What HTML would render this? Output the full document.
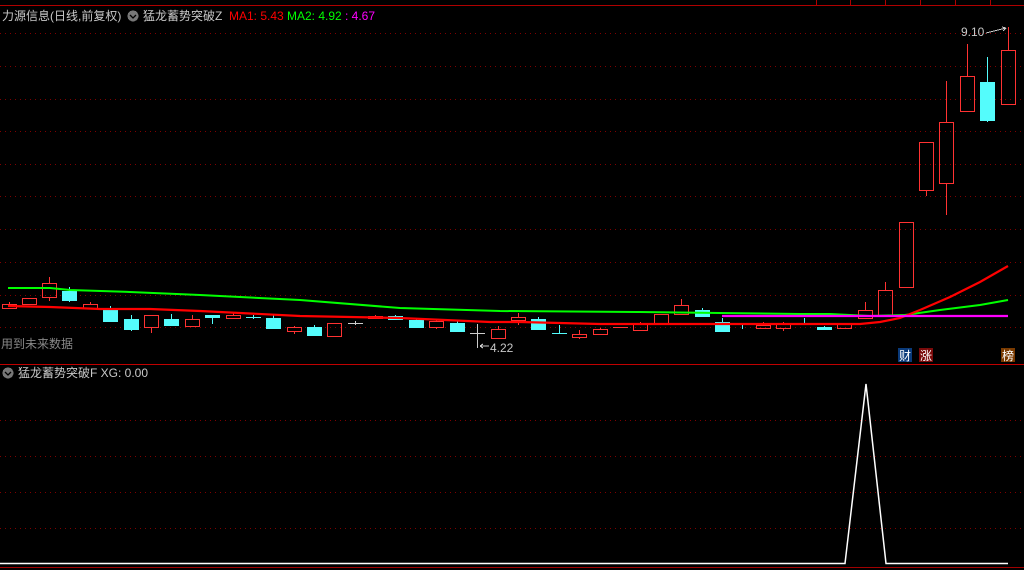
<!DOCTYPE html>
<html><head><meta charset="utf-8"><style>
html,body{margin:0;padding:0;background:#000;width:1024px;height:570px;overflow:hidden}
svg{display:block}
text{font-family:"Liberation Sans","Noto Sans CJK SC",sans-serif;font-size:12px}
</style></head><body>
<svg id="s" width="1024" height="570" xmlns="http://www.w3.org/2000/svg" shape-rendering="crispEdges">
<rect width="1024" height="570" fill="#000"/>
<line x1="0" y1="5.5" x2="1024" y2="5.5" stroke="#b00000"/>
<g stroke="#b00000"><line x1="816.5" y1="0" x2="816.5" y2="5"/><line x1="850.5" y1="0" x2="850.5" y2="5"/><line x1="885.5" y1="0" x2="885.5" y2="5"/><line x1="920.5" y1="0" x2="920.5" y2="5"/><line x1="955.5" y1="0" x2="955.5" y2="5"/><line x1="990.5" y1="0" x2="990.5" y2="5"/></g>
<g id="grid" stroke="#800000" stroke-dasharray="1,4"></g>
<line x1="0" y1="364.5" x2="1024" y2="364.5" stroke="#c00000"/>
<line x1="0" y1="567.5" x2="1024" y2="567.5" stroke="#a00000"/>
<g id="c"></g>
<text x="2" y="20" fill="#c8c8c8">力源信息(日线,前复权)</text>
<circle cx="133" cy="16" r="5.5" fill="#777"/><path d="M130 15 L133 18 L136 15" stroke="#000" fill="none" stroke-width="1.3" shape-rendering="auto"/>
<text x="143" y="20" fill="#c8c8c8">猛龙蓄势突破Z</text>
<text x="229" y="20" fill="#f00">MA1: 5.43</text>
<text x="287" y="20" fill="#0f0">MA2: 4.92</text>
<text x="345" y="20" fill="#f0f">: 4.67</text>
<text x="1" y="348" fill="#888">用到未来数据</text>
<text x="490" y="352" fill="#c8c8c8">4.22</text>
<path d="M480 346 L489 346 M480 346 L483 344 M480 346 L483 348" stroke="#c8c8c8" fill="none"/>
<text x="961" y="36" fill="#c8c8c8">9.10</text>
<path d="M986 33 L1006 28 M1006 28 L1002 27 M1006 28 L1003 31" stroke="#c8c8c8" fill="none"/>
<rect x="898" y="348" width="14" height="14" fill="#0a3a7a"/><text x="899" y="360" fill="#fff">财</text>
<rect x="919" y="348" width="14" height="14" fill="#7a0a0a"/><text x="920" y="360" fill="#fff">涨</text>
<rect x="1001" y="348" width="14" height="14" fill="#7a3a00"/><text x="1002" y="360" fill="#fff">榜</text>
<circle cx="8" cy="373" r="5.5" fill="#777"/><path d="M5 372 L8 375 L11 372" stroke="#000" fill="none" stroke-width="1.3" shape-rendering="auto"/>
<text x="18" y="377" fill="#c8c8c8">猛龙蓄势突破F  XG: 0.00</text>
<polyline points="0,563.5 845,563.5 866,384 886,563.5 1008,563.5" stroke="#fff" fill="none" stroke-width="1.5" shape-rendering="auto"/>
</svg>
<script>
var NS="http://www.w3.org/2000/svg",g=document.getElementById('grid'),c=document.getElementById('c');
[33,66,99,131,164,196,229,262,295,327,420,456,492,528].forEach(function(y){var l=document.createElementNS(NS,'line');l.setAttribute('x1',0);l.setAttribute('x2',1024);l.setAttribute('y1',y+.5);l.setAttribute('y2',y+.5);g.appendChild(l);});
function el(t,a){var e=document.createElementNS(NS,t);for(var k in a)e.setAttribute(k,a[k]);c.appendChild(e);return e;}
var K=[[2,304,308,302,308,'r'],[22,298,304,298,304,'r'],[42,283,297,277,301,'r'],[62,291,300,287,302,'c'],[83,304,308,302,308,'r'],[103,309,321,306,321,'c'],[124,319,329,315,331,'c'],[144,315,327,315,333,'r'],[164,319,325,314,325,'c'],[185,319,326,315,326,'r'],[205,315,317,315,324,'c'],[226,315,318,313,318,'r'],[246,317,318,315,319,'c'],[266,318,328,315,328,'c'],[287,327,331,326,334,'r'],[307,327,335,325,336,'c'],[327,323,336,323,336,'r'],[348,323,323,321,325,'w'],[368,316,318,315,318,'r'],[388,316,319,315,319,'c'],[409,320,327,318,327,'c'],[429,321,327,319,329,'r'],[450,323,331,321,331,'c'],[470,333,333,324,348,'w'],[491,329,338,326,338,'r'],[511,317,320,313,325,'r'],[531,319,329,317,329,'c'],[552,333,333,325,333,'c'],[572,334,337,330,339,'r'],[593,329,334,328,334,'r'],[613,327,328,327,328,'r'],[633,323,330,322,330,'r'],[654,314,324,314,324,'r'],[674,305,314,299,314,'r'],[695,310,316,308,316,'c'],[715,322,331,318,331,'c'],[735,324,324,323,329,'c'],[756,325,328,322,328,'r'],[776,324,328,322,331,'r'],[797,324,324,318,324,'c'],[817,327,329,326,330,'c'],[837,323,328,323,328,'r'],[858,310,318,302,318,'r'],[878,290,315,282,315,'r'],[899,222,287,222,287,'r'],[919,142,190,142,196,'r'],[939,122,183,81,215,'r'],[960,76,111,44,111,'r'],[980,82,120,57,122,'c'],[1001,50,104,27,104,'r']];
function pl(p,col,w){el('polyline',{points:p,stroke:col,fill:'none','stroke-width':w,'shape-rendering':'auto'});}
K.forEach(function(k){var x=k[0],t=k[1],b=k[2],h=k[3],lo=k[4],col=k[5]=='r'?'#ff3232':(k[5]=='c'?'#54fcfc':'#ccc');var cx=x+7.5;
if(h<t)el('line',{x1:cx,y1:h,x2:cx,y2:t,stroke:col});
if(lo>b)el('line',{x1:cx,y1:b,x2:cx,y2:lo,stroke:col});
if(b-t<=1){el('line',{x1:x,y1:t+.5,x2:x+15,y2:t+.5,stroke:col});}
else if(k[5]=='r'){el('rect',{x:x+.5,y:t+.5,width:14,height:b-t,fill:'none',stroke:col});}
else el('rect',{x:x,y:t,width:15,height:b-t+1,fill:col});
});
pl('8,288 50,288 70,290 130,292 200,295 300,300 400,308 500,311 640,312 720,313 800,314 830,314 870,316 905,315 940,310 980,305 1008,300','#00ff00',2);
pl('8,306 50,307 100,309 150,309 200,311 300,316 400,318 490,322 520,322 600,324 700,324 740,324 800,324 860,324 880,322 900,318 920,310 950,297 980,282 1008,266','#ff0000',2.2);
pl('722,316 1008,316','#ff00ff',2.2);
</script>
</body></html>
